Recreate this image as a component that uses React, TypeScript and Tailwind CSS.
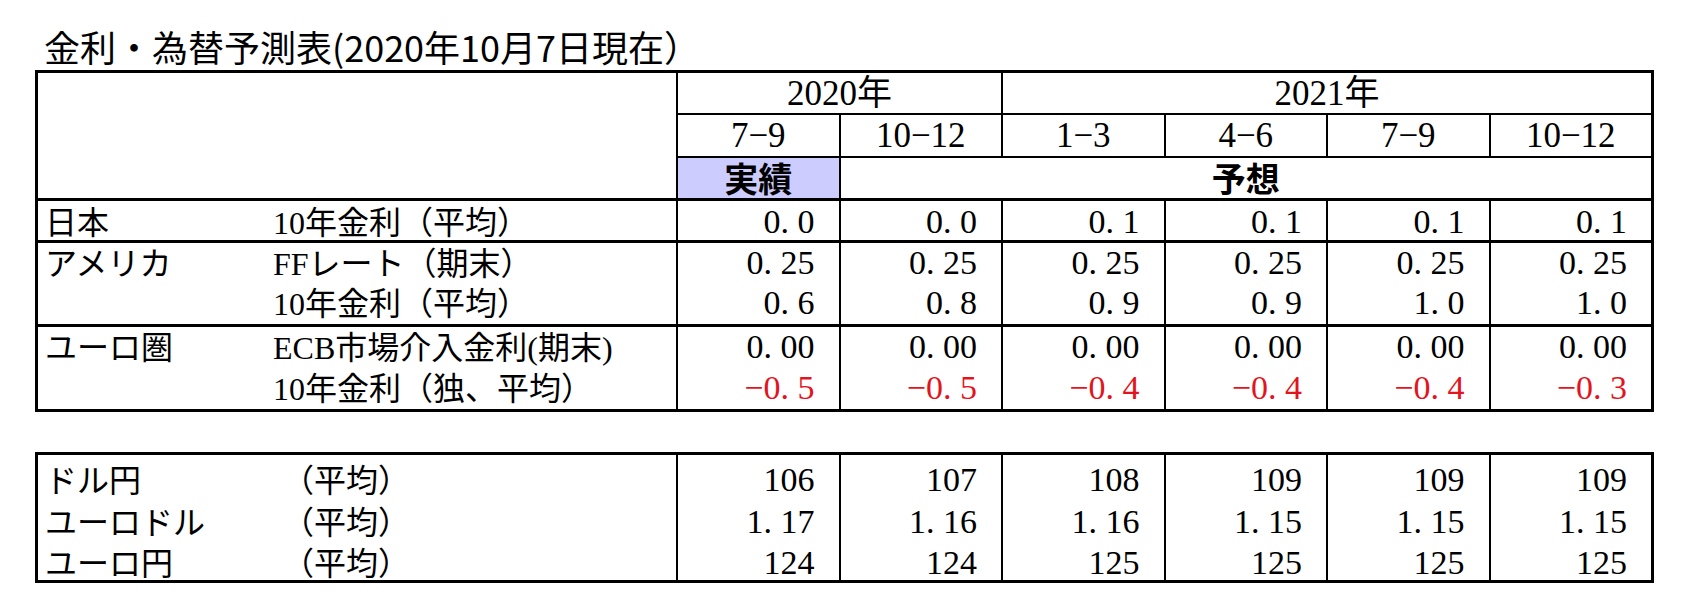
import React from 'react';

const SERIF = "font-['Liberation_Serif','Noto_Sans_CJK_JP',serif]";
const GOTHIC = "font-['Noto_Sans_CJK_JP',sans-serif]";

type Line = { label: string; vals: string[] };
type Group = { name: string; lines: Line[]; lh: string[]; last?: boolean };

const periods = ['7−9', '10−12', '1−3', '4−6', '7−9', '10−12'];

const rates: Group[] = [
  {
    name: '日本',
    lh: ['h-[39px] pb-[1px]'],
    lines: [{ label: '10年金利（平均）', vals: ['0.0', '0.0', '0.1', '0.1', '0.1', '0.1'] }],
  },
  {
    name: 'アメリカ',
    lh: ['h-[40.5px] pb-[4px]', 'h-[40.5px] pb-[4px]'],
    lines: [
      { label: 'FFレート（期末）', vals: ['0.25', '0.25', '0.25', '0.25', '0.25', '0.25'] },
      { label: '10年金利（平均）', vals: ['0.6', '0.8', '0.9', '0.9', '1.0', '1.0'] },
    ],
  },
  {
    name: 'ユーロ圏',
    lh: ['h-[41px] pb-[4px]', 'h-[41px] pb-[4px]'],
    last: true,
    lines: [
      { label: 'ECB市場介入金利(期末)', vals: ['0.00', '0.00', '0.00', '0.00', '0.00', '0.00'] },
      { label: '10年金利（独、平均）', vals: ['-0.5', '-0.5', '-0.4', '-0.4', '-0.4', '-0.3'] },
    ],
  },
];

const fx = [
  { name: 'ドル円', vals: ['106', '107', '108', '109', '109', '109'] },
  { name: 'ユーロドル', vals: ['1.17', '1.16', '1.16', '1.15', '1.15', '1.15'] },
  { name: 'ユーロ円', vals: ['124', '124', '125', '125', '125', '125'] },
];
const fxLh = ['h-[42px]', 'h-[42px]', 'h-[41px]'];

function Num({ v }: { v: string }) {
  const neg = v.startsWith('-');
  const body = neg ? v.slice(1) : v;
  const [i, f] = body.split('.');
  return (
    <span className={neg ? 'text-[#e4141e]' : ''}>
      {neg && '−'}
      {i}
      {f !== undefined && (
        <>
          <span className="mr-[0.25em]">.</span>
          {f}
        </>
      )}
    </span>
  );
}

function RateGroup({ g }: { g: Group }) {
  const bb = g.last ? '' : 'border-b-[3px] border-black';
  return (
    <>
      <div className={bb}>
        {g.lines.map((_, i) => (
          <div key={i} className={`flex items-end pl-[7px] ${g.lh[i]}`}>
            {i === 0 ? g.name : ''}
          </div>
        ))}
      </div>
      <div className={bb}>
        {g.lines.map((l, i) => (
          <div key={i} className={`flex items-end pl-[3px] whitespace-nowrap ${g.lh[i]}`}>
            {l.label}
          </div>
        ))}
      </div>
      {[0, 1, 2, 3, 4, 5].map(c => (
        <div key={c} className={`border-l-2 border-black ${bb}`}>
          {g.lines.map((l, i) => (
            <div key={i} className={`flex items-end justify-end pr-[24px] text-[34px] ${g.lh[i]}`}>
              <Num v={l.vals[c]} />
            </div>
          ))}
        </div>
      ))}
    </>
  );
}

export default function App() {
  return (
    <div className="w-[1687px] h-[610px] bg-white text-black pl-[35px]">
      {/* Title */}
      <div className={`${GOTHIC} text-[36px] leading-none pt-[28px] ml-[9px] h-[70px]`}>
        金利・為替予測表(2020年10月7日現在）
      </div>

      {/* Rates table */}
      <div
        className={`${SERIF} text-[32px] leading-none w-[1619px] border-[3px] border-black grid grid-cols-[232px_406px_repeat(6,minmax(0,1fr))]`}
      >
        <div className="col-span-2 row-span-3 border-b-[3px] border-black" />
        <div className="col-span-2 h-[42px] text-[35px] border-l-2 border-b-2 border-black flex items-center justify-center">
          2020年
        </div>
        <div className="col-span-4 h-[42px] text-[35px] border-l-2 border-b-2 border-black flex items-center justify-center">
          2021年
        </div>
        {periods.map((p, i) => (
          <div
            key={i}
            className="h-[43px] text-[35px] border-l-2 border-b-2 border-black flex items-center justify-center"
          >
            {p}
          </div>
        ))}
        <div
          className={`${GOTHIC} font-bold text-[34px] h-[43px] border-l-2 border-b-[3px] border-black bg-[#ccccff] flex items-center justify-center`}
        >
          実績
        </div>
        <div
          className={`${GOTHIC} font-bold text-[34px] col-span-5 h-[43px] border-l-2 border-b-[3px] border-black flex items-center justify-center`}
        >
          予想
        </div>

        {rates.map(g => (
          <RateGroup key={g.name} g={g} />
        ))}
      </div>

      {/* FX table */}
      <div
        className={`${SERIF} text-[32px] leading-none mt-[40px] w-[1619px] border-[3px] border-black grid grid-cols-[232px_406px_repeat(6,minmax(0,1fr))]`}
      >
        <div>
          {fx.map((r, i) => (
            <div key={i} className={`flex items-end pl-[7px] ${fxLh[i]}`}>
              {r.name}
            </div>
          ))}
        </div>
        <div>
          {fx.map((r, i) => (
            <div key={i} className={`flex items-end pl-[12px] ${fxLh[i]}`}>
              （平均）
            </div>
          ))}
        </div>
        {[0, 1, 2, 3, 4, 5].map(c => (
          <div key={c} className="border-l-2 border-black">
            {fx.map((r, i) => (
              <div key={i} className={`flex items-end justify-end pr-[24px] text-[34px] ${fxLh[i]}`}>
                <Num v={r.vals[c]} />
              </div>
            ))}
          </div>
        ))}
      </div>
    </div>
  );
}
